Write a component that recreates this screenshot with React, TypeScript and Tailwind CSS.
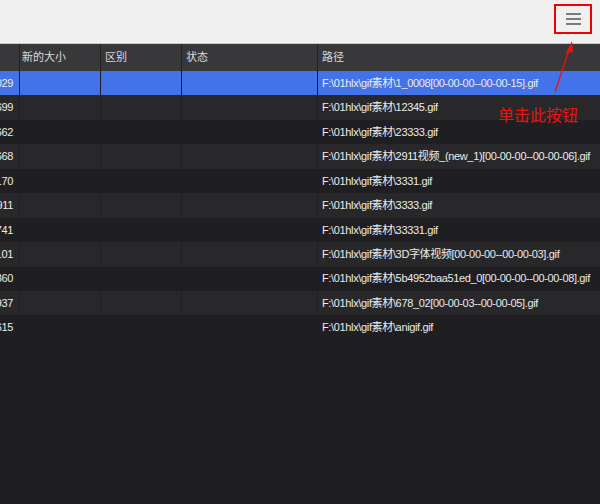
import React from "react";

const rows: { size: string; path: string }[] = [
  { size: "1029", path: "F:\\01hlx\\gif素材\\1_0008[00-00-00--00-00-15].gif" },
  { size: "5699", path: "F:\\01hlx\\gif素材\\12345.gif" },
  { size: "5662", path: "F:\\01hlx\\gif素材\\23333.gif" },
  { size: "5668", path: "F:\\01hlx\\gif素材\\2911视频_(new_1)[00-00-00--00-00-06].gif" },
  { size: "2170", path: "F:\\01hlx\\gif素材\\3331.gif" },
  { size: "3911", path: "F:\\01hlx\\gif素材\\3333.gif" },
  { size: "7741", path: "F:\\01hlx\\gif素材\\33331.gif" },
  { size: "2101", path: "F:\\01hlx\\gif素材\\3D字体视频[00-00-00--00-00-03].gif" },
  { size: "3860", path: "F:\\01hlx\\gif素材\\5b4952baa51ed_0[00-00-00--00-00-08].gif" },
  { size: "6937", path: "F:\\01hlx\\gif素材\\678_02[00-00-03--00-00-05].gif" },
  { size: "5615", path: "F:\\01hlx\\gif素材\\anigif.gif" },
];

const font = { fontFamily: '"Liberation Sans", "Noto Sans CJK SC", sans-serif' };

export default function App() {
  return (
    <div
      className="relative w-[600px] h-[504px] overflow-hidden bg-[#1f1f21] flex flex-col"
      style={font}
    >
      {/* top bar */}
      <div className="h-[44px] bg-[#f0f0f0] border-b border-[#c8c8c8] flex justify-end items-start pt-[4px] pr-[8px] shrink-0">
        <button className="w-[38px] h-[30px] border-2 border-[#f00000] flex flex-col items-center justify-center gap-[3.5px]">
          <span className="block w-[15px] h-[1.5px] bg-[#7a7a7a]" />
          <span className="block w-[15px] h-[1.5px] bg-[#7a7a7a]" />
          <span className="block w-[15px] h-[1.5px] bg-[#7a7a7a]" />
        </button>
      </div>

      {/* header */}
      <div className="h-[27px] bg-[#38383b] flex text-[11px] text-[#dcdcdc] shrink-0">
        <div className="w-[20px] border-r border-[#232325]" />
        <div className="w-[81px] border-r border-[#232325] flex items-center pl-[2px]">新的大小</div>
        <div className="w-[81px] border-r border-[#232325] flex items-center pl-[4px]">区别</div>
        <div className="w-[136px] border-r border-[#232325] flex items-center pl-[4px]">状态</div>
        <div className="flex-1 flex items-center pl-[4px]">路径</div>
      </div>

      {/* rows */}
      <div className="flex flex-col">
        {rows.map((r, i) => {
          const selected = i === 0;
          const light = i % 2 === 1;
          const bg = selected ? "bg-[#4472e8]" : light ? "bg-[#28282a]" : "bg-[#1f1f21]";
          const sep = selected ? "border-[#1c1c20]" : "border-[#1f1f21]";
          return (
            <div key={i} className={`h-[24.45px] flex text-[11px] tracking-[-0.35px] text-[#ececec] ${bg}`}>
              <div className={`w-[20px] border-r ${sep} flex items-center justify-end pr-[6px] overflow-hidden whitespace-nowrap`}>
                {r.size}
              </div>
              <div className={`w-[81px] border-r ${sep}`} />
              <div className={`w-[81px] border-r ${sep}`} />
              <div className={`w-[136px] border-r ${sep}`} />
              <div className="flex-1 flex items-center pl-[4px] whitespace-nowrap overflow-hidden">{r.path}</div>
            </div>
          );
        })}
      </div>

      {/* annotation arrow */}
      <svg className="absolute left-0 top-0 pointer-events-none" width="600" height="504">
        <line x1="555" y1="92" x2="569" y2="50" stroke="#ee1111" strokeWidth="1.3" />
        <polygon points="572,41 566,53 573,52" fill="#ee1111" />
      </svg>
      <div
        className="absolute left-[498px] top-[104px] text-[16px] leading-[20px] text-[#f01010]"
        style={{ fontFamily: '"Noto Sans CJK SC", sans-serif' }}
      >
        单击此按钮
      </div>
    </div>
  );
}
